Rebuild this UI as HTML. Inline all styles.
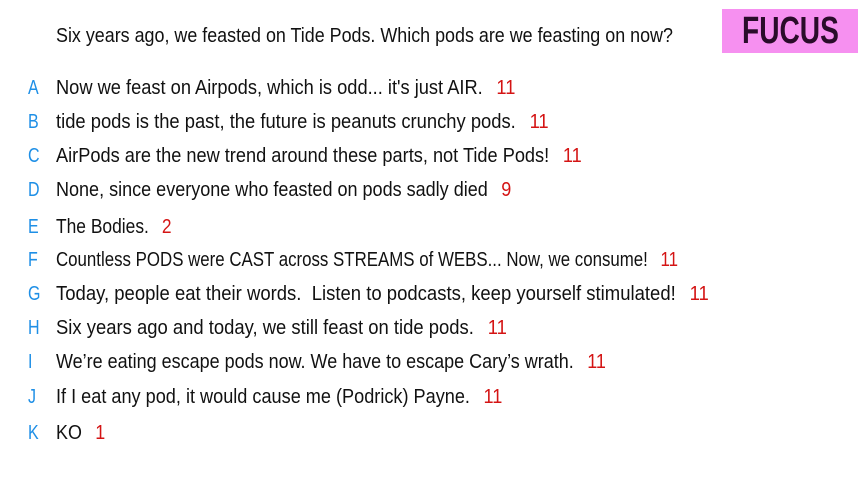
<!DOCTYPE html>
<html><head><meta charset="utf-8"><style>
body{margin:0;width:864px;height:482px;background:#fff;position:relative;overflow:hidden;font-family:"Liberation Sans Narrow","Liberation Sans",sans-serif;color:#111;}
.r{position:absolute;left:0;height:24px;line-height:24px;font-size:20px;white-space:nowrap}
.l{position:absolute;left:28px;color:#1e8fe6;transform-origin:0 50%;transform:scaleX(0.8);display:inline-block}
.t{position:absolute;left:56px;transform-origin:0 50%;transform:scaleX(0.895)}
.n{color:#d41414;margin-left:15px}
.logo{position:absolute;left:722px;top:9px;width:136px;height:44px;background:#f690f0;color:#2a0c2a;font-weight:bold;font-size:38px;line-height:44px;text-align:center}
.logo span{display:inline-block;transform:scaleX(0.74)}
</style></head><body>
<div class="logo"><span>FUCUS</span></div>
<div class="r" style="top:24px"><span class="t">Six years ago, we feasted on Tide Pods. Which pods are we feasting on now?</span></div>
<div class="r" style="top:76px"><span class="l">A</span><span class="t" style="transform:scaleX(0.913)">Now we feast on Airpods, which is odd... it's just AIR.<span class="n">11</span></span></div>
<div class="r" style="top:110px"><span class="l">B</span><span class="t" style="transform:scaleX(0.919)">tide pods is the past, the future is peanuts crunchy pods.<span class="n">11</span></span></div>
<div class="r" style="top:144px"><span class="l">C</span><span class="t" style="transform:scaleX(0.909)">AirPods are the new trend around these parts, not Tide Pods!<span class="n">11</span></span></div>
<div class="r" style="top:178px"><span class="l">D</span><span class="t" style="transform:scaleX(0.901)">None, since everyone who feasted on pods sadly died<span class="n">9</span></span></div>
<div class="r" style="top:215px"><span class="l">E</span><span class="t" style="transform:scaleX(0.87)">The Bodies.<span class="n">2</span></span></div>
<div class="r" style="top:248px"><span class="l">F</span><span class="t" style="transform:scaleX(0.843)">Countless PODS were CAST across STREAMS of WEBS... Now, we consume!<span class="n">11</span></span></div>
<div class="r" style="top:282px"><span class="l">G</span><span class="t" style="transform:scaleX(0.925)">Today, people eat their words.&nbsp; Listen to podcasts, keep yourself stimulated!<span class="n">11</span></span></div>
<div class="r" style="top:316px"><span class="l">H</span><span class="t" style="transform:scaleX(0.922)">Six years ago and today, we still feast on tide pods.<span class="n">11</span></span></div>
<div class="r" style="top:350px"><span class="l">I</span><span class="t" style="transform:scaleX(0.899)">We’re eating escape pods now. We have to escape Cary’s wrath.<span class="n">11</span></span></div>
<div class="r" style="top:385px"><span class="l">J</span><span class="t" style="transform:scaleX(0.906)">If I eat any pod, it would cause me (Podrick) Payne.<span class="n">11</span></span></div>
<div class="r" style="top:421px"><span class="l">K</span><span class="t">KO<span class="n">1</span></span></div>
</body></html>
